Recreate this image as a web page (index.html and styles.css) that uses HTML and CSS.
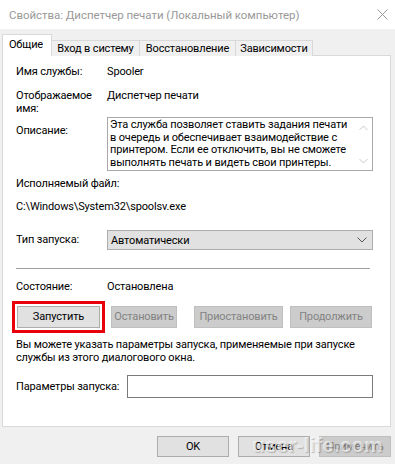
FILE: index.html
```html
<!DOCTYPE html>
<html lang="ru">
<head>
<meta charset="utf-8">
<link rel="stylesheet" href="styles.css">
</head>
<body>
<div class="window">
  <div class="titlebar">
    <span class="title">Свойства: Диспетчер печати (Локальный компьютер)</span>
    <svg class="close" width="11" height="11" viewBox="0 0 11 11"><path d="M0.5 0.5 L10.5 10.5 M10.5 0.5 L0.5 10.5" stroke="#9a9a9a" stroke-width="1" fill="none"/></svg>
  </div>
  <div class="body">
    <div class="tabs">
      <div class="tab active">Общие</div>
      <div class="tab t2">Вход в систему</div>
      <div class="tab t3">Восстановление</div>
      <div class="tab t4">Зависимости</div>
    </div>
    <div class="panel">
      <div class="row r1"><span class="label">Имя службы:</span><span class="value">Spooler</span></div>
      <div class="row r2"><span class="label">Отображаемое<br>имя:</span><span class="value">Диспетчер печати</span></div>
      <div class="row r3"><span class="label lbl-desc">Описание:</span>
        <div class="desc">
          <div class="desc-text">Эта служба позволяет ставить задания печати<br>в очередь и обеспечивает взаимодействие с<br>принтером. Если ее отключить, вы не сможете<br>выполнять печать и видеть свои принтеры.</div>
          <div class="scroll">
            <svg width="9" height="6" viewBox="0 0 9 6"><path d="M0.5 5 L4.5 1 L8.5 5" stroke="#c8c8c8" fill="none"/></svg>
            <svg width="9" height="6" viewBox="0 0 9 6"><path d="M0.5 1 L4.5 5 L8.5 1" stroke="#c8c8c8" fill="none"/></svg>
          </div>
        </div>
      </div>
      <div class="line r4">Исполняемый файл:</div>
      <div class="line r5">C:\Windows\System32\spoolsv.exe</div>
      <div class="row r6"><span class="label">Тип запуска:</span>
        <div class="select"><span>Автоматически</span>
          <svg width="10" height="6" viewBox="0 0 10 6"><path d="M0.5 0.5 L5 5 L9.5 0.5" stroke="#555" fill="none"/></svg>
        </div>
      </div>
      <div class="sep"></div>
      <div class="row r7"><span class="label">Состояние:</span><span class="value">Остановлена</span></div>
      <div class="buttons">
        <button class="btn b-start">Запустить</button>
        <button class="btn dis b-stop">Остановить</button>
        <button class="btn dis b-pause">Приостановить</button>
        <button class="btn dis b-cont">Продолжить</button>
      </div>
      <p class="hint">Вы можете указать параметры запуска, применяемые при запуске<br>службы из этого диалогового окна.</p>
      <div class="row r8"><span class="label-params">Параметры запуска:</span><div class="input"></div></div>
    </div>
    <div class="footer">
      <button class="btn fbtn">OK</button>
      <button class="btn fbtn">Отмена</button>
      <button class="btn fbtn dis">Применить</button>
      <span class="watermark">user-life.com</span>
    </div>
  </div>
</div>
</body>
</html>
```
FILE: styles.css
```css
* { box-sizing: border-box; }
html, body { margin: 0; padding: 0; }
body {
  width: 395px;
  height: 464px;
  overflow: hidden;
  font-family: Roboto, "Liberation Sans", sans-serif;
  font-size: 11px;
  letter-spacing: -0.15px;
  color: #000;
  background: #f0f0f0;
}
.window { width: 395px; height: 464px; display: flex; flex-direction: column; }
.titlebar {
  height: 29px;
  background: #fff;
  display: flex;
  align-items: center;
  justify-content: space-between;
  padding: 0 7px 0 9px;
}
.title { color: #999; font-size: 11.5px; letter-spacing: -0.05px; line-height: 14px; white-space: nowrap; }
.close { margin-top: -1px; }
.body { flex: 1; display: flex; flex-direction: column; padding: 0 4px 0 2px; position: relative; }
.tabs { display: flex; align-items: flex-end; height: 27px; margin-bottom: -1px; position: relative; z-index: 1; }
.tab {
  height: 16px;
  border: 1px solid #d9d9d9;
  border-bottom: none;
  margin-left: -1px;
  background: #f0f0f0;
  line-height: 15px;
  text-align: center;
  white-space: nowrap;
}
.tab.active {
  height: 22px;
  width: 50px;
  margin-left: 0;
  background: #fff;
  line-height: 20px;
  padding-right: 2px;
}
.t2 { width: 89px; }
.t3 { width: 97px; }
.t4 { width: 78px; }
.panel {
  height: 372px;
  background: #fff;
  border: 1px solid #d9d9d9;
  padding: 9px 17px 0 13px;
  display: flex;
  flex-direction: column;
}
.row { display: flex; white-space: nowrap; }
.label { width: 91px; flex: none; line-height: 14px; }
.value { line-height: 14px; }
.r1 { height: 14px; }
.r2 { margin-top: 10px; height: 26px; }
.r2 .label { line-height: 13px; }
.r2 .value { line-height: 13px; }
.r3 { margin-top: 2px; }
.lbl-desc { padding-top: 7px; }
.desc {
  flex: 1;
  height: 54px;
  border: 1px solid #a9a9a9;
  display: flex;
  padding: 1px 0 0 2px;
}
.desc-text { flex: 1; line-height: 12.5px; }
.scroll { width: 17px; display: flex; flex-direction: column; justify-content: space-between; align-items: center; padding: 6px 0 6px; }
.line { line-height: 14px; white-space: nowrap; }
.r4 { margin-top: 6px; }
.r5 { margin-top: 9px; }
.r6 { margin-top: 16px; align-items: center; }
.select {
  flex: 1;
  height: 20px;
  background: #e1e1e1;
  border: 1px solid #adadad;
  display: flex;
  align-items: center;
  justify-content: space-between;
  padding: 0 5px 0 3px;
}
.sep { margin-top: 18px; height: 1px; background: #a0a0a0; margin-right: 3px; }
.r7 { margin-top: 11px; height: 14px; }
.buttons { display: flex; margin-top: 12px; margin-left: 1px; }
.btn {
  font-family: inherit;
  font-size: 11px;
  letter-spacing: -0.15px;
  height: 22px;
  background: #e1e1e1;
  border: 1px solid #adadad;
  color: #000;
  padding: 0;
  line-height: 18px;
  white-space: nowrap;
}
.btn.dis { background: #cccccc; border-color: #bfbfbf; color: #838383; }
.b-start { width: 83px; outline: 3px solid #e8000b; outline-offset: 2px; }
.b-stop { width: 66px; margin-left: 11px; }
.b-pause { width: 89px; margin-left: 17px; }
.b-cont { width: 82px; margin-left: 7px; }
.hint { margin: 11px 0 0; line-height: 12.5px; white-space: nowrap; }
.r8 { margin-top: 11px; align-items: center; }
.label-params { width: 111px; flex: none; line-height: 14px; }
.input { flex: 1; height: 23px; border: 1px solid #7a7a7a; background: #fff; }
.footer { display: flex; justify-content: flex-end; gap: 9px; margin-top: 9px; position: relative; }
.fbtn { width: 72px; height: 21px; }
.watermark {
  position: absolute;
  left: 250px;
  top: -3px;
  font-family: "Liberation Sans", sans-serif;
  font-weight: bold;
  font-size: 21px;
  letter-spacing: 0;
  color: rgba(255,255,255,0.6);
  text-shadow: 1px 1px 1px rgba(0,0,0,0.2);
  pointer-events: none;
}
```
